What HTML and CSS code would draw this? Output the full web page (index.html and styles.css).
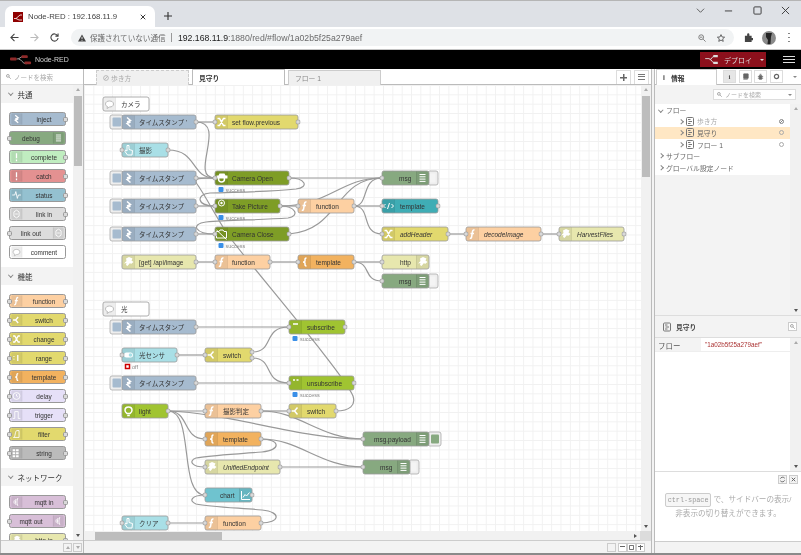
FILE: index.html
```html
<!DOCTYPE html>
<html lang="ja">
<head>
    <meta charset="UTF-8">
    <meta name="viewport" content="width=device-width, initial-scale=1.0">
    <title>Node-RED : 192.168.11.9</title>
    <link rel="stylesheet" href="styles.css">
</head>
<body>
    <!-- shared icons, each drawn in a 13x14 node band -->
    <svg class="defs" aria-hidden="true">
        <symbol id="band" viewBox="0 0 13 14"><path class="band" d="M2 .5H13V13.5H2A1.5 1.5 0 0 1 .5 12V2A1.5 1.5 0 0 1 2 .5Z"/><path class="band-line" d="M13 .5V13.5"/></symbol>
        <symbol id="band-r" viewBox="0 0 13 14"><path class="band" d="M0 .5H11A1.5 1.5 0 0 1 12.5 2V12A1.5 1.5 0 0 1 11 13.5H0Z"/><path class="band-line" d="M.5 .5V13.5"/></symbol>
        <symbol id="i-inject" viewBox="0 0 13 14"><path class="ic thick" d="M5 2.5l3.5 3-3.5 1.5M8.500 7l-3.500 1.500 3.500 3"/></symbol>
        <symbol id="i-debug" viewBox="0 0 13 14"><path class="ic" d="M3.5 3.5h6M3.5 5.8h6M3.5 8.1h6M3.5 10.400h6"/></symbol>
        <symbol id="i-alert" viewBox="0 0 13 14"><path class="ic thick" d="M6.5 2.5v6M6.5 10v2"/></symbol>
        <symbol id="i-status" viewBox="0 0 13 14"><path class="ic" d="M1.5 7h3l1.200-4 1.800 8 1.200-4h3"/></symbol>
        <symbol id="i-link" viewBox="0 0 13 14"><path class="ic" d="M6.5 2.5l3 2v5l-3 2-3-2v-5zM5 7h3"/></symbol>
        <symbol id="i-comment" viewBox="0 0 13 14"><path class="ic grey" d="M2.5 7c0-2 1.800-3 4-3s4 1 4 3-1.800 3-4 3l-2.500 1.500.5-2c-1.200-.3-2-1.200-2-2.500z"/></symbol>
        <symbol id="i-function" viewBox="0 0 13 14"><path class="ic thick" d="M8.5 3C6.800 2.600 6.500 4 6.300 6L5.600 10C5.400 11.200 4.800 11.500 3.800 11.300M4.500 6.600h3.500"/></symbol>
        <symbol id="i-switch" viewBox="0 0 13 14"><path class="ic thick" d="M2.5 7h3l3-3.500M5.500 7l3 3.500"/></symbol>
        <symbol id="i-change" viewBox="0 0 13 14"><path class="ic thick" d="M2.5 3.500h2l4 7h2M2.5 10.500h2l4-7h2"/></symbol>
        <symbol id="i-range" viewBox="0 0 13 14"><path class="ic thick" d="M3.5 5v.8M3.5 8v.8M8 3.500v7"/></symbol>
        <symbol id="i-template" viewBox="0 0 13 14"><path class="ic thick" d="M8.5 3C6.800 3 7 4 7 5.500S6.500 7 5 7c1.500 0 2 .2 2 1.500s-.2 2.500 1.500 2.500"/></symbol>
        <symbol id="i-delay" viewBox="0 0 13 14"><circle class="ic" cx="6.5" cy="7" r="4"/><path class="ic" d="M6.5 4.800V7l1.500 1"/></symbol>
        <symbol id="i-trigger" viewBox="0 0 13 14"><path class="ic" d="M2 11h2.500V3h4v8h2.500"/></symbol>
        <symbol id="i-filter" viewBox="0 0 13 14"><path class="ic" d="M3 11c2.500 0 1.500-8 4-8h2.500v8z"/></symbol>
        <symbol id="i-string" viewBox="0 0 13 14"><path class="fl" d="M2 2.500h3v2.500H2zM6 2.500h3v2.500H6zM2 6h3v2.500H2zM6 6h3v2.500H6zM6 9.500h3v2.500H6zM2 9.500h3v2.500H2z"/></symbol>
        <symbol id="i-mqtt" viewBox="0 0 13 14"><path class="ic" d="M6 3.500c-1 2-1 5 0 7M8 2.500c-1.300 3-1.300 6 0 9M4 5c-.6 1.400-.6 2.600 0 4"/></symbol>
        <symbol id="i-http" viewBox="0 0 13 14"><path class="fl" d="M2 8.500l2.500-2.500-.5-2.500 3-1.500 3.500 1.500-1 2 2 1.500-2.500 2-1-1-2.500 3-1.500-1 .5-2z"/></symbol>
        <symbol id="i-button" viewBox="0 0 13 14"><path class="ic" d="M5 2.500v5.500L3.500 7 3 8.500 5.500 12H10l.5-4.500-3.500-1V2.500z"/></symbol>
        <symbol id="i-toggle" viewBox="0 0 13 14"><rect class="fl" x="2" y="4.500" width="9" height="5" rx="2.500"/><circle class="toggle-dot" cx="8.500" cy="7" r="1.800"/></symbol>
        <symbol id="i-bulb" viewBox="0 0 13 14"><path class="ic thick" d="M5 9.500C3.800 8.800 3 7.700 3 6.300 3 4.300 4.600 3 6.500 3S10 4.300 10 6.300c0 1.400-.8 2.500-2 3.200zM5.200 11.500h2.600"/></symbol>
        <symbol id="i-html" viewBox="0 0 13 14"><path class="ic" d="M3.500 5L1.500 7l2 2M9.500 5l2 2-2 2M7.500 4L5.500 10"/></symbol>
        <symbol id="i-chart" viewBox="0 0 13 14"><path class="ic" d="M2.500 3v8.500h8.500M4 9.500l2-3 1.500 1.500 3-3.500"/></symbol>
        <symbol id="i-cam-open" viewBox="0 0 13 14"><path class="fl" d="M1.500 4.500h2l1-2h5l1 2h2v3h-11z"/><circle class="ic thick" cx="6.500" cy="8" r="3"/></symbol>
        <symbol id="i-cam-take" viewBox="0 0 13 14"><circle class="ic" cx="6.500" cy="4" r="3"/><circle class="fl" cx="6.500" cy="4" r="1.200"/></symbol>
        <symbol id="i-cam-close" viewBox="0 0 13 14"><path class="ic" d="M1.500 4.500h2.500l1-1.500h3l1 1.500h2.500v6.500h-10zM1.500 3l10 9.500"/></symbol>
        <symbol id="i-sub" viewBox="0 0 13 14"><path class="ic thick" d="M4 4h5"/></symbol>
        <symbol id="i-unsub" viewBox="0 0 13 14"><path class="ic thick" d="M4 4h2M7.500 4h2"/></symbol>
        <symbol id="port" viewBox="0 0 5 5"><rect class="port" x=".5" y=".5" width="4" height="4" rx="1.200"/></symbol>
        <symbol id="flow-ic" viewBox="0 0 8 9"><rect x=".5" y=".5" width="7" height="8" rx="1" fill="none" stroke="currentColor"/><path d="M2 2.500h2.500M6 4.500H2.500M2 6.500h2.500" fill="none" stroke="currentColor"/></symbol>
    </svg>

    <div class="tabstrip">
        <div class="tab">
            <svg class="favicon" viewBox="0 0 10 10"><rect width="10" height="10" fill="#8f0000"/><path d="M1 6.500h2L7 3h2M3 6.500l3 1.500h3" fill="none" stroke="#fff" stroke-width=".8"/></svg>
            <span class="tab-title">Node-RED : 192.168.11.9</span>
            <svg class="tab-close" viewBox="0 0 8 8"><path d="M1 1l6 6M7 1l-6 6" stroke="#333" stroke-width="1.300"/></svg>
        </div>
        <svg class="new-tab" viewBox="0 0 10 10"><path d="M5 0v10M0 5h10" stroke="#333" stroke-width="1.400"/></svg>
        <div class="winctrls">
            <svg viewBox="0 0 10 10"><path d="M1 3l4 4 4-4" fill="none" stroke="#555"/></svg>
            <svg viewBox="0 0 10 10"><path d="M1 5.500h8" stroke="#333"/></svg>
            <svg viewBox="0 0 10 10"><rect x="1" y="1" width="8" height="8" rx="1" fill="none" stroke="#333"/></svg>
            <svg viewBox="0 0 10 10"><path d="M1 1l8 8M9 1l-8 8" stroke="#333"/></svg>
        </div>
    </div>

    <div class="toolbar">
        <svg class="nav" viewBox="0 0 10 10"><path d="M9.500 5H1M5 1L1 5l4 4" fill="none" stroke="#444" stroke-width="1.200"/></svg>
        <svg class="nav" viewBox="0 0 10 10"><path d="M.5 5H9M5 1l4 4-4 4" fill="none" stroke="#bbb" stroke-width="1.200"/></svg>
        <svg class="nav" viewBox="0 0 10 10"><path d="M8.500 3A4 4 0 1 0 9 5.500M9 .5V3.500H6" fill="none" stroke="#444" stroke-width="1.200"/></svg>
        <div class="omnibox">
            <svg class="warn" viewBox="0 0 10 10"><path d="M5 .5L10 9.500H0z" fill="#444"/><path d="M5 3.500v3M5 7.500v1" stroke="#fff"/></svg>
            <span class="insecure">保護されていない通信</span>
            <span class="omni-sep"></span>
            <span class="url"><b>192.168.11.9</b>:1880/red/#flow/1a02b5f25a279aef</span>
            <svg class="omni-ic" viewBox="0 0 10 10"><circle cx="4" cy="4" r="3" fill="none" stroke="#666"/><path d="M6.500 6.500L9.500 9.500M2.500 4h3" stroke="#666"/></svg>
            <svg class="omni-ic" viewBox="0 0 10 10"><path d="M5 .8l1.300 2.900 3.200.3-2.400 2.100.7 3.100L5 7.600 2.200 9.200l.7-3.100L.5 4l3.200-.3z" fill="none" stroke="#444"/></svg>
        </div>
        <svg class="ext" viewBox="0 0 10 10"><path d="M1 3h2.500V1.500a1 1 0 0 1 2.500 0V3H8.500v2.500H10a1 1 0 0 1 0 2.500H8.500V10H1z" fill="#444"/></svg>
        <svg class="avatar" viewBox="0 0 14 14"><circle cx="7" cy="7" r="7" fill="#8a8a8a"/><path d="M4 2h6l-1 4-.5 7h-3l.5-4L4 6z" fill="#222"/></svg>
        <svg class="dots" viewBox="0 0 4 12"><path d="M2 1v1.200M2 5.400v1.200M2 9.800v1.200" stroke="#444" stroke-width="1.400"/></svg>
    </div>

    <header class="nr-header">
        <svg class="nr-logo" viewBox="0 0 24 12"><path d="M7 5C11 5 10 2.500 14 2.500M9 5c3 0 4 5 8 5" fill="none" stroke="#ccc" stroke-width=".8"/><rect x="0" y="3.500" width="7" height="3" rx="1" fill="#8f2a2a"/><rect x="12" y="1" width="6.500" height="3" rx="1" fill="#8f2a2a"/><rect x="15" y="7.500" width="7" height="3" rx="1" fill="#8f2a2a"/></svg>
        <span class="nr-title">Node-RED</span>
        <div class="deploy">
            <svg class="deploy-ic" viewBox="0 0 14 10"><path d="M0 4h5M5 5C8 5 7 1.500 10 1.500M5 5c3 0 2 3.500 5 3.500" fill="none" stroke="#ddd"/><rect x="9" y="0" width="5" height="2.500" fill="#ddd"/><rect x="9" y="7.500" width="5" height="2.500" fill="#ddd"/></svg>
            <span class="deploy-label">デプロイ</span>
            <span class="deploy-caret"></span>
        </div>
        <div class="burger"><i></i><i></i><i></i></div>
    </header>

    <div class="main">
        <aside class="palette">
            <div class="search"><svg class="search-ic" viewBox="0 0 8 8"><circle cx="3" cy="3" r="2.200" fill="none" stroke="#777"/><path d="M5 5l2.500 2.500" stroke="#777"/></svg><span>ノードを検索</span></div>
            <div class="palette-body">
                <div class="palette-list">
                    <div class="cat-head"><span class="chev"></span>共通</div>
                    <div class="cat">
                        <div class="pnode inject"><svg><use href="#band"/><use href="#i-inject"/></svg><span>inject</span><i class="pport out"></i></div>
                        <div class="pnode debug"><i class="pport in"></i><span>debug</span><svg><use href="#band-r"/><use href="#i-debug"/></svg></div>
                        <div class="pnode complete"><svg><use href="#band"/><use href="#i-alert"/></svg><span>complete</span><i class="pport out"></i></div>
                        <div class="pnode catch"><svg><use href="#band"/><use href="#i-alert"/></svg><span>catch</span><i class="pport out"></i></div>
                        <div class="pnode status"><svg><use href="#band"/><use href="#i-status"/></svg><span>status</span><i class="pport out"></i></div>
                        <div class="pnode link"><svg><use href="#band"/><use href="#i-link"/></svg><span>link in</span><i class="pport out"></i></div>
                        <div class="pnode link"><i class="pport in"></i><span>link out</span><svg><use href="#band-r"/><use href="#i-link"/></svg></div>
                        <div class="pnode comment"><svg><use href="#band"/><use href="#i-comment"/></svg><span>comment</span></div>
                    </div>
                    <div class="cat-head"><span class="chev"></span>機能</div>
                    <div class="cat">
                        <div class="pnode function"><i class="pport in"></i><svg><use href="#band"/><use href="#i-function"/></svg><span>function</span><i class="pport out"></i></div>
                        <div class="pnode switch"><i class="pport in"></i><svg><use href="#band"/><use href="#i-switch"/></svg><span>switch</span><i class="pport out"></i></div>
                        <div class="pnode switch"><i class="pport in"></i><svg><use href="#band"/><use href="#i-change"/></svg><span>change</span><i class="pport out"></i></div>
                        <div class="pnode switch"><i class="pport in"></i><svg><use href="#band"/><use href="#i-range"/></svg><span>range</span><i class="pport out"></i></div>
                        <div class="pnode template"><i class="pport in"></i><svg><use href="#band"/><use href="#i-template"/></svg><span>template</span><i class="pport out"></i></div>
                        <div class="pnode delay"><i class="pport in"></i><svg><use href="#band"/><use href="#i-delay"/></svg><span>delay</span><i class="pport out"></i></div>
                        <div class="pnode delay"><i class="pport in"></i><svg><use href="#band"/><use href="#i-trigger"/></svg><span>trigger</span><i class="pport out"></i></div>
                        <div class="pnode switch"><i class="pport in"></i><svg><use href="#band"/><use href="#i-filter"/></svg><span>filter</span><i class="pport out"></i></div>
                        <div class="pnode string"><i class="pport in"></i><svg><use href="#band"/><use href="#i-string"/></svg><span>string</span><i class="pport out"></i></div>
                    </div>
                    <div class="cat-head"><span class="chev"></span>ネットワーク</div>
                    <div class="cat">
                        <div class="pnode mqtt"><svg><use href="#band"/><use href="#i-mqtt"/></svg><span>mqtt in</span><i class="pport out"></i></div>
                        <div class="pnode mqtt"><i class="pport in"></i><span>mqtt out</span><svg><use href="#band-r"/><use href="#i-mqtt"/></svg></div>
                        <div class="pnode http"><svg><use href="#band"/><use href="#i-http"/></svg><span>http in</span><i class="pport out"></i></div>
                    </div>
                </div>
                <div class="vbar palette-bar"><span class="up"></span><span class="thumb"></span><span class="down"></span></div>
            </div>
            <div class="palette-foot"><span class="foot-btn"><i class="up-mini"></i></span><span class="foot-btn"><i class="down-mini"></i></span></div>
        </aside>

        <section class="workspace">
            <div class="ws-tabs">
                <div class="ws-tab off"><svg class="no-ic" viewBox="0 0 8 8"><circle cx="4" cy="4" r="3.200" fill="none" stroke="#aaa"/><path d="M2 6.200L6 1.800" stroke="#aaa"/></svg>歩き方</div>
                <div class="ws-tab active">見守り</div>
                <div class="ws-tab">フロー 1</div>
                <div class="ws-tools">
                    <span class="tool-btn plus"></span>
                    <span class="tool-btn list"></span>
                </div>
            </div>
            <div class="ws-canvas">
                <svg class="flow" viewBox="84 85 557 446" width="557" height="446">
                    <g class="wires">
                        <path d="M196,122H215"/>
                        <path d="M196,122C228,122 188,178 215,178"/>
                        <path d="M168,150C198,150 190,178 215,178"/>
                        <path d="M196,178H215"/>
                        <path d="M196,206H215"/>
                        <path d="M196,234H215"/>
                        <path d="M336,411C350,411 356,405 353,396C345,375 250,265 228,235C215,215 205,195 197,184C193,178 200,178 215,178"/>
                        <path d="M289,178C305,178 310,187 296,189C270,192 235,192 210,193C196,194 196,206 215,206"/>
                        <path d="M280,206C296,206 300,216 288,218C260,220 230,220 206,222C190,224 195,234 215,234"/>
                        <path d="M289,178H382"/>
                        <path d="M289,234C340,230 335,178 382,178"/>
                        <path d="M280,206C330,206 340,178 382,178"/>
                        <path d="M280,206H298"/>
                        <path d="M354,206C370,206 360,178 382,178"/>
                        <path d="M354,206H382"/>
                        <path d="M354,206C372,206 360,234 382,234"/>
                        <path d="M448,234H466"/>
                        <path d="M541,234H559"/>
                        <path d="M196,262H215"/>
                        <path d="M270,262H298"/>
                        <path d="M354,262H382"/>
                        <path d="M354,262C372,262 362,281 382,281"/>
                        <path d="M196,327H289"/>
                        <path d="M177,355H205"/>
                        <path d="M252,352C275,352 262,327 289,327"/>
                        <path d="M252,358C275,358 262,383 289,383"/>
                        <path d="M196,383H289"/>
                        <path d="M168,411H205"/>
                        <path d="M168,411C230,413 300,439 363,439"/>
                        <path d="M168,411C190,411 182,439 205,439"/>
                        <path d="M168,411C195,411 178,495 205,495"/>
                        <path d="M261,411H289"/>
                        <path d="M261,411C300,411 320,439 363,439"/>
                        <path d="M261,439C300,439 320,467 363,467"/>
                        <path d="M261,439C280,439 282,450 262,452C240,454 210,455 196,458C188,461 192,467 205,467"/>
                        <path d="M280,467H363"/>
                        <path d="M168,523H205"/>
                        <path d="M261,523C280,523 282,512 262,510C240,508 210,507 196,504C188,501 192,495 205,495"/>
                    </g>

                    <g class="node" transform="translate(103,97)"><rect class="body comment" width="46" height="14" rx="2"/><use href="#band" width="13" height="14"/><use href="#i-comment" width="13" height="14"/><text x="18" y="9.500">カメラ</text></g>
                    <g class="node" transform="translate(103,302)"><rect class="body comment" width="46" height="14" rx="2"/><use href="#band" width="13" height="14"/><use href="#i-comment" width="13" height="14"/><text x="18" y="9.500">光</text></g>

                    <g class="node" transform="translate(122,115)"><rect class="btn" x="-12" width="13" height="14" rx="2"/><rect class="btn-fill inject" x="-9.500" y="2.500" width="8.500" height="9" rx="1"/><rect class="body inject" width="74" height="14" rx="2"/><use href="#band" width="13" height="14"/><use href="#i-inject" width="13" height="14"/><text x="17" y="9.500">タイムスタンプ '</text><use href="#port" x="71.500" y="4.500" width="5" height="5"/></g>
                    <g class="node" transform="translate(122,171)"><rect class="btn" x="-12" width="13" height="14" rx="2"/><rect class="btn-fill inject" x="-9.500" y="2.500" width="8.500" height="9" rx="1"/><rect class="body inject" width="74" height="14" rx="2"/><use href="#band" width="13" height="14"/><use href="#i-inject" width="13" height="14"/><text x="17" y="9.500">タイムスタンプ</text><use href="#port" x="71.500" y="4.500" width="5" height="5"/></g>
                    <g class="node" transform="translate(122,199)"><rect class="btn" x="-12" width="13" height="14" rx="2"/><rect class="btn-fill inject" x="-9.500" y="2.500" width="8.500" height="9" rx="1"/><rect class="body inject" width="74" height="14" rx="2"/><use href="#band" width="13" height="14"/><use href="#i-inject" width="13" height="14"/><text x="17" y="9.500">タイムスタンプ</text><use href="#port" x="71.500" y="4.500" width="5" height="5"/></g>
                    <g class="node" transform="translate(122,227)"><rect class="btn" x="-12" width="13" height="14" rx="2"/><rect class="btn-fill inject" x="-9.500" y="2.500" width="8.500" height="9" rx="1"/><rect class="body inject" width="74" height="14" rx="2"/><use href="#band" width="13" height="14"/><use href="#i-inject" width="13" height="14"/><text x="17" y="9.500">タイムスタンプ</text><use href="#port" x="71.500" y="4.500" width="5" height="5"/></g>
                    <g class="node" transform="translate(122,320)"><rect class="btn" x="-12" width="13" height="14" rx="2"/><rect class="btn-fill inject" x="-9.500" y="2.500" width="8.500" height="9" rx="1"/><rect class="body inject" width="74" height="14" rx="2"/><use href="#band" width="13" height="14"/><use href="#i-inject" width="13" height="14"/><text x="17" y="9.500">タイムスタンプ</text><use href="#port" x="71.500" y="4.500" width="5" height="5"/></g>
                    <g class="node" transform="translate(122,376)"><rect class="btn" x="-12" width="13" height="14" rx="2"/><rect class="btn-fill inject" x="-9.500" y="2.500" width="8.500" height="9" rx="1"/><rect class="body inject" width="74" height="14" rx="2"/><use href="#band" width="13" height="14"/><use href="#i-inject" width="13" height="14"/><text x="17" y="9.500">タイムスタンプ</text><use href="#port" x="71.500" y="4.500" width="5" height="5"/></g>

                    <g class="node" transform="translate(215,115)"><rect class="body switch" width="83" height="14" rx="2"/><use href="#band" width="13" height="14"/><use href="#i-change" width="13" height="14"/><text x="17" y="9.500">set flow.previous</text><use href="#port" x="-2.500" y="4.500" width="5" height="5"/><use href="#port" x="80.500" y="4.500" width="5" height="5"/></g>

                    <g class="node" transform="translate(122,143)"><rect class="body uibtn" width="46" height="14" rx="2"/><use href="#band" width="13" height="14"/><use href="#i-button" width="13" height="14"/><text x="17" y="9.500">撮影</text><use href="#port" x="-2.500" y="4.500" width="5" height="5"/><use href="#port" x="43.500" y="4.500" width="5" height="5"/></g>

                    <g class="node" transform="translate(215,171)"><rect class="body camera" width="74" height="14" rx="2"/><use href="#band" width="13" height="14"/><use href="#i-cam-open" width="13" height="14"/><text x="17" y="9.500">Camera Open</text><use href="#port" x="-2.500" y="4.500" width="5" height="5"/><use href="#port" x="71.500" y="4.500" width="5" height="5"/><rect class="dot ok" x="3.500" y="16" width="5" height="5" rx="1"/><text class="stat" x="10.500" y="20.500">success</text></g>
                    <g class="node" transform="translate(215,199)"><rect class="body camera" width="65" height="14" rx="2"/><use href="#band" width="13" height="14"/><use href="#i-cam-take" width="13" height="14"/><text x="17" y="9.500">Take Picture</text><use href="#port" x="-2.500" y="4.500" width="5" height="5"/><use href="#port" x="62.500" y="4.500" width="5" height="5"/><rect class="dot ok" x="3.500" y="16" width="5" height="5" rx="1"/><text class="stat" x="10.500" y="20.500">success</text></g>
                    <g class="node" transform="translate(215,227)"><rect class="body camera" width="74" height="14" rx="2"/><use href="#band" width="13" height="14"/><use href="#i-cam-close" width="13" height="14"/><text x="17" y="9.500">Camera Close</text><use href="#port" x="-2.500" y="4.500" width="5" height="5"/><use href="#port" x="71.500" y="4.500" width="5" height="5"/><rect class="dot ok" x="3.500" y="16" width="5" height="5" rx="1"/><text class="stat" x="10.500" y="20.500">success</text></g>

                    <g class="node" transform="translate(298,199)"><rect class="body function" width="56" height="14" rx="2"/><use href="#band" width="13" height="14"/><use href="#i-function" width="13" height="14"/><text x="18" y="9.500">function</text><use href="#port" x="-2.500" y="4.500" width="5" height="5"/><use href="#port" x="53.500" y="4.500" width="5" height="5"/></g>

                    <g class="node" transform="translate(382,171)"><rect class="btn" x="46" width="10" height="14" rx="2"/><rect class="btn-fill blank" x="47" y="2.500" width="6.500" height="9"/><rect class="body debug" width="47" height="14" rx="2"/><use href="#band-r" x="34" width="13" height="14"/><use href="#i-debug" x="34" width="13" height="14"/><text x="17" y="9.500">msg</text><use href="#port" x="-2.500" y="4.500" width="5" height="5"/></g>
                    <g class="node" transform="translate(382,199)"><rect class="body html" width="56" height="14" rx="2"/><use href="#band" width="13" height="14"/><use href="#i-html" width="13" height="14"/><text x="18" y="9.500">template</text><use href="#port" x="-2.500" y="4.500" width="5" height="5"/><use href="#port" x="53.500" y="4.500" width="5" height="5"/></g>
                    <g class="node" transform="translate(382,227)"><rect class="body switch" width="66" height="14" rx="2"/><use href="#band" width="13" height="14"/><use href="#i-change" width="13" height="14"/><text class="em" x="18" y="9.500">addHeader</text><use href="#port" x="-2.500" y="4.500" width="5" height="5"/><use href="#port" x="63.500" y="4.500" width="5" height="5"/></g>
                    <g class="node" transform="translate(466,227)"><rect class="body function" width="75" height="14" rx="2"/><use href="#band" width="13" height="14"/><use href="#i-function" width="13" height="14"/><text class="em" x="18" y="9.500">decodeImage</text><use href="#port" x="-2.500" y="4.500" width="5" height="5"/><use href="#port" x="72.500" y="4.500" width="5" height="5"/></g>
                    <g class="node" transform="translate(559,227)"><rect class="body http" width="65" height="14" rx="2"/><use href="#band" width="13" height="14"/><use href="#i-http" width="13" height="14"/><text class="em" x="18" y="9.500">HarvestFiles</text><use href="#port" x="-2.500" y="4.500" width="5" height="5"/><use href="#port" x="62.500" y="4.500" width="5" height="5"/></g>

                    <g class="node" transform="translate(122,255)"><rect class="body http" width="74" height="14" rx="2"/><use href="#band" width="13" height="14"/><use href="#i-http" width="13" height="14"/><text x="17" y="9.500">[get] /api/image</text><use href="#port" x="71.500" y="4.500" width="5" height="5"/></g>
                    <g class="node" transform="translate(215,255)"><rect class="body function" width="55" height="14" rx="2"/><use href="#band" width="13" height="14"/><use href="#i-function" width="13" height="14"/><text x="17" y="9.500">function</text><use href="#port" x="-2.500" y="4.500" width="5" height="5"/><use href="#port" x="52.500" y="4.500" width="5" height="5"/></g>
                    <g class="node" transform="translate(298,255)"><rect class="body template" width="56" height="14" rx="2"/><use href="#band" width="13" height="14"/><use href="#i-template" width="13" height="14"/><text x="18" y="9.500">template</text><use href="#port" x="-2.500" y="4.500" width="5" height="5"/><use href="#port" x="53.500" y="4.500" width="5" height="5"/></g>
                    <g class="node" transform="translate(382,255)"><rect class="body http" width="47" height="14" rx="2"/><use href="#band-r" x="34" width="13" height="14"/><use href="#i-http" x="34" width="13" height="14"/><text x="18" y="9.500">http</text><use href="#port" x="-2.500" y="4.500" width="5" height="5"/></g>
                    <g class="node" transform="translate(382,274)"><rect class="btn" x="46" width="10" height="14" rx="2"/><rect class="btn-fill blank" x="47" y="2.500" width="6.500" height="9"/><rect class="body debug" width="47" height="14" rx="2"/><use href="#band-r" x="34" width="13" height="14"/><use href="#i-debug" x="34" width="13" height="14"/><text x="17" y="9.500">msg</text><use href="#port" x="-2.500" y="4.500" width="5" height="5"/></g>

                    <g class="node" transform="translate(289,320)"><rect class="body lime" width="56" height="14" rx="2"/><use href="#band" width="13" height="14"/><use href="#i-sub" width="13" height="14"/><text x="18" y="9.500">subscribe</text><use href="#port" x="-2.500" y="4.500" width="5" height="5"/><use href="#port" x="53.500" y="4.500" width="5" height="5"/><rect class="dot ok" x="3.500" y="16" width="5" height="5" rx="1"/><text class="stat" x="11" y="20.500">success</text></g>
                    <g class="node" transform="translate(122,348)"><rect class="body uibtn" width="55" height="14" rx="2"/><use href="#band" width="13" height="14"/><use href="#i-toggle" width="13" height="14"/><text x="17" y="9.500">光センサ</text><use href="#port" x="-2.500" y="4.500" width="5" height="5"/><use href="#port" x="52.500" y="4.500" width="5" height="5"/><rect class="dot off" x="3.500" y="16.500" width="4" height="4"/><text class="stat" x="10" y="20.500">off</text></g>
                    <g class="node" transform="translate(205,348)"><rect class="body switch" width="47" height="14" rx="2"/><use href="#band" width="13" height="14"/><use href="#i-switch" width="13" height="14"/><text x="18" y="9.500">switch</text><use href="#port" x="-2.500" y="4.500" width="5" height="5"/><use href="#port" x="44.500" y="1.500" width="5" height="5"/><use href="#port" x="44.500" y="7.500" width="5" height="5"/></g>
                    <g class="node" transform="translate(289,376)"><rect class="body lime" width="65" height="14" rx="2"/><use href="#band" width="13" height="14"/><use href="#i-unsub" width="13" height="14"/><text x="18" y="9.500">unsubscribe</text><use href="#port" x="-2.500" y="4.500" width="5" height="5"/><use href="#port" x="62.500" y="4.500" width="5" height="5"/><rect class="dot ok" x="3.500" y="16" width="5" height="5" rx="1"/><text class="stat" x="11" y="20.500">success</text></g>

                    <g class="node" transform="translate(122,404)"><rect class="body lime" width="46" height="14" rx="2"/><use href="#band" width="13" height="14"/><use href="#i-bulb" width="13" height="14"/><text x="17" y="9.500">light</text><use href="#port" x="43.500" y="4.500" width="5" height="5"/></g>
                    <g class="node" transform="translate(205,404)"><rect class="body function" width="56" height="14" rx="2"/><use href="#band" width="13" height="14"/><use href="#i-function" width="13" height="14"/><text x="18" y="9.500">撮影判定</text><use href="#port" x="-2.500" y="4.500" width="5" height="5"/><use href="#port" x="53.500" y="4.500" width="5" height="5"/></g>
                    <g class="node" transform="translate(289,404)"><rect class="body switch" width="47" height="14" rx="2"/><use href="#band" width="13" height="14"/><use href="#i-switch" width="13" height="14"/><text x="18" y="9.500">switch</text><use href="#port" x="-2.500" y="4.500" width="5" height="5"/><use href="#port" x="44.500" y="4.500" width="5" height="5"/></g>
                    <g class="node" transform="translate(205,432)"><rect class="body template" width="56" height="14" rx="2"/><use href="#band" width="13" height="14"/><use href="#i-template" width="13" height="14"/><text x="18" y="9.500">template</text><use href="#port" x="-2.500" y="4.500" width="5" height="5"/><use href="#port" x="53.500" y="4.500" width="5" height="5"/></g>
                    <g class="node" transform="translate(363,432)"><rect class="btn" x="65" width="13" height="14" rx="2"/><rect class="btn-fill debug" x="68" y="2.500" width="8" height="9" rx="1"/><rect class="body debug" width="66" height="14" rx="2"/><use href="#band-r" x="53" width="13" height="14"/><use href="#i-debug" x="53" width="13" height="14"/><text x="11" y="9.500">msg.payload</text><use href="#port" x="-2.500" y="4.500" width="5" height="5"/></g>
                    <g class="node" transform="translate(205,460)"><rect class="body http" width="75" height="14" rx="2"/><use href="#band" width="13" height="14"/><use href="#i-http" width="13" height="14"/><text class="em" x="18" y="9.500">UnifiedEndpoint</text><use href="#port" x="-2.500" y="4.500" width="5" height="5"/><use href="#port" x="72.500" y="4.500" width="5" height="5"/></g>
                    <g class="node" transform="translate(363,460)"><rect class="btn" x="46" width="10" height="14" rx="2"/><rect class="btn-fill blank" x="47" y="2.500" width="6.500" height="9"/><rect class="body debug" width="47" height="14" rx="2"/><use href="#band-r" x="34" width="13" height="14"/><use href="#i-debug" x="34" width="13" height="14"/><text x="17" y="9.500">msg</text><use href="#port" x="-2.500" y="4.500" width="5" height="5"/></g>
                    <g class="node" transform="translate(205,488)"><rect class="body chart" width="47" height="14" rx="2"/><use href="#band-r" x="34" width="13" height="14"/><use href="#i-chart" x="34" width="13" height="14"/><text x="15" y="9.500">chart</text><use href="#port" x="-2.500" y="4.500" width="5" height="5"/><use href="#port" x="44.500" y="4.500" width="5" height="5"/></g>
                    <g class="node" transform="translate(122,516)"><rect class="body uibtn" width="46" height="14" rx="2"/><use href="#band" width="13" height="14"/><use href="#i-button" width="13" height="14"/><text x="17" y="9.500">クリア</text><use href="#port" x="-2.500" y="4.500" width="5" height="5"/><use href="#port" x="43.500" y="4.500" width="5" height="5"/></g>
                    <g class="node" transform="translate(205,516)"><rect class="body function" width="56" height="14" rx="2"/><use href="#band" width="13" height="14"/><use href="#i-function" width="13" height="14"/><text x="18" y="9.500">function</text><use href="#port" x="-2.500" y="4.500" width="5" height="5"/><use href="#port" x="53.500" y="4.500" width="5" height="5"/></g>
                </svg>
                <div class="vbar canvas-bar"><span class="up"></span><span class="thumb"></span><span class="down"></span></div>
            </div>
            <div class="hbar">
                <span class="hthumb"></span>
                <span class="right"></span>
                <span class="corner"></span>
            </div>
            <div class="ws-foot">
                <span class="foot-btn wide"></span>
                <span class="zoom-group">
                    <span class="foot-btn minus"></span><span class="foot-btn ring"></span><span class="foot-btn add"></span>
                </span>
            </div>
        </section>

        <div class="separator"></div>

        <aside class="sidebar">
            <div class="side-tabs">
                <div class="side-tab"><b>i</b>情報</div>
                <span class="side-btn on"><b>i</b></span>
                <span class="side-btn"><svg viewBox="0 0 8 8"><path d="M2 1h5v5H2zM1.500 7h5" fill="#666" stroke="#666"/></svg></span>
                <span class="side-btn"><svg viewBox="0 0 8 8"><path d="M2.500 3h3v4h-3zM3 1.500h2M1 4h1M6 4h1M1 6h1M6 6h1" fill="#666" stroke="#666"/></svg></span>
                <span class="side-btn"><svg viewBox="0 0 8 8"><circle cx="4" cy="4" r="2.400" fill="none" stroke="#666" stroke-width="1.400"/></svg></span>
                <span class="caret"></span>
            </div>
            <div class="side-top">
                <div class="side-search-row">
                    <div class="side-search"><svg class="search-ic" viewBox="0 0 8 8"><circle cx="3" cy="3" r="2.200" fill="none" stroke="#777"/><path d="M5 5l2.500 2.500" stroke="#777"/></svg><span>ノードを検索</span><i class="caret"></i></div>
                </div>
                <div class="side-tree-wrap">
                    <div class="tree">
                        <div class="row"><i class="open"></i>フロー</div>
                        <div class="row child off"><i class="shut"></i><svg class="flow-ic"><use href="#flow-ic"/></svg>歩き方<span class="state no"></span></div>
                        <div class="row child sel"><i class="shut"></i><svg class="flow-ic"><use href="#flow-ic"/></svg>見守り<span class="state"></span></div>
                        <div class="row child"><i class="shut"></i><svg class="flow-ic"><use href="#flow-ic"/></svg>フロー 1<span class="state"></span></div>
                        <div class="row"><i class="shut"></i>サブフロー</div>
                        <div class="row"><i class="shut"></i>グローバル設定ノード</div>
                    </div>
                    <div class="vbar side-bar"><span class="up"></span><span class="down"></span></div>
                </div>
            </div>
            <div class="info-head">
                <svg class="flow-ic big"><use href="#flow-ic"/></svg><b>見守り</b>
                <span class="foot-btn find"><svg class="search-ic" viewBox="0 0 8 8"><circle cx="3" cy="3" r="2.200" fill="none" stroke="#777"/><path d="M5 5l2.500 2.500" stroke="#777"/></svg></span>
            </div>
            <div class="info-body">
                <div class="info-table">
                    <div class="info-row"><span class="key">フロー</span><span class="val">"1a02b5f25a279aef"</span></div>
                </div>
                <div class="vbar side-bar"><span class="up"></span><span class="down"></span></div>
            </div>
            <div class="tips">
                <div class="tips-btns">
                    <span class="foot-btn"><svg viewBox="0 0 8 8"><path d="M6.500 2.500A3 3 0 0 0 1.500 3M1.500 5.500a3 3 0 0 0 5-.5" fill="none" stroke="#555"/></svg></span>
                    <span class="foot-btn"><svg viewBox="0 0 8 8"><path d="M2 2l4 4M6 2L2 6" stroke="#555"/></svg></span>
                </div>
                <p><code>ctrl-space</code> で、サイドバーの表示/<br>非表示の切り替えができます。</p>
            </div>
            <div class="side-foot"></div>
        </aside>
    </div>
</body>
</html>
```

FILE: styles.css
```css
* {
    margin: 0;
    padding: 0;
    box-sizing: border-box;
}

html, body {
    width: 801px;
    height: 555px;
    overflow: hidden;
}

body {
    display: flex;
    flex-direction: column;
    font-family: "Liberation Sans", "Noto Sans CJK JP", sans-serif;
    background: #b8b8b8;
    border-bottom: 2px solid #8a8a8a;
    color: #555;
    /* the whole capture is a scaled down window, so nothing is pixel sharp */
    filter: blur(.3px);
}

.defs {
    position: absolute;
    width: 0;
    height: 0;
}

/* browser frame */
.tabstrip {
    height: 27px;
    flex: none;
    display: flex;
    align-items: flex-end;
    background: #dee1e6;
    border-top: 1px solid #b5b5b5;
    padding-left: 5px;
}

.tab {
    width: 150px;
    height: 21px;
    background: #fff;
    border-radius: 7px 7px 0 0;
    display: flex;
    align-items: center;
    padding: 0 7px 0 8px;
}

.favicon {
    width: 10px;
    height: 10px;
}

.tab-title {
    font-size: 7.8px;
    color: #444;
    margin-left: 5px;
    flex: 1;
}

.tab-close {
    width: 6px;
    height: 6px;
    margin-right: 2px;
}

.new-tab {
    width: 8px;
    height: 8px;
    margin: 0 0 7px 9px;
}

.winctrls {
    margin-left: auto;
    align-self: flex-start;
    display: flex;
    gap: 19.5px;
    padding: 5px 11px 0 0;
}

.winctrls svg {
    width: 9px;
    height: 9px;
}

.toolbar {
    height: 23px;
    flex: none;
    display: flex;
    align-items: center;
    background: #fff;
    border-bottom: 1px solid #c4c4c4;
    padding: 0 10px 1px 10px;
}

.nav {
    width: 9px;
    height: 9px;
    margin-right: 11px;
}

.omnibox {
    width: 665px;
    height: 17px;
    margin-left: 1px;
    background: #f1f3f4;
    border-radius: 9px;
    display: flex;
    align-items: center;
    padding: 0 9px 0 7px;
}

.warn {
    width: 8px;
    height: 8px;
    flex: none;
}

.insecure {
    font-size: 7.6px;
    color: #6a6a6a;
    margin-left: 4px;
    width: 76px;
    flex: none;
    white-space: nowrap;
}

.omni-sep {
    width: 1px;
    height: 9px;
    background: #999;
    margin: 0 6px 0 5px;
    flex: none;
}

.url {
    font-size: 8.7px;
    color: #6a6a6a;
    flex: 1;
}

.url b {
    font-weight: normal;
    color: #222;
}

.omni-ic {
    width: 8px;
    height: 8px;
    margin-left: 11px;
}

.ext {
    width: 9px;
    height: 9px;
    margin-left: 10px;
}

.avatar {
    width: 14px;
    height: 14px;
    margin-left: 9px;
}

.dots {
    width: 4px;
    height: 11px;
    margin-left: 11px;
}

/* node-red header */
.nr-header {
    height: 19px;
    flex: none;
    display: flex;
    align-items: center;
    background: #000;
    padding-left: 10px;
}

.nr-logo {
    width: 23px;
    height: 12px;
}

.nr-title {
    color: #d4d4d4;
    font-size: 7px;
    margin-left: 2px;
}

.deploy {
    width: 66px;
    height: 15px;
    margin-left: auto;
    background: #8c101c;
    display: flex;
    align-items: center;
    padding-left: 5px;
}

.deploy-ic {
    width: 13px;
    height: 9px;
}

.deploy-label {
    color: #ddd;
    font-size: 7px;
    margin-left: 6px;
}

.deploy-caret {
    border: 2px solid transparent;
    border-top: 2.5px solid #ddd;
    border-bottom: 0;
    margin-left: 8px;
}

.burger {
    width: 12px;
    margin: 0 6px 0 17px;
    display: flex;
    flex-direction: column;
    gap: 1.5px;
}

.burger i {
    height: 1.5px;
    background: #ddd;
}

/* main columns */
.main {
    flex: 1;
    min-height: 0;
    display: flex;
    background: #fff;
    border-left: 1px solid #bbb;
}

.palette {
    width: 83px;
    flex: none;
    display: flex;
    flex-direction: column;
    border-right: 1px solid #bbb;
    background: #f3f3f3;
}

.search {
    height: 16px;
    flex: none;
    background: #fff;
    border-bottom: 1px solid #ddd;
    display: flex;
    align-items: center;
    padding-left: 5px;
    font-size: 6.5px;
    color: #aaa;
}

.search-ic {
    width: 5px;
    height: 5px;
    margin-right: 3px;
}

.palette-body {
    flex: 1;
    min-height: 0;
    display: flex;
}

.palette-list {
    width: 72px;
    overflow: hidden;
}

.cat-head {
    height: 18px;
    background: #f3f3f3;
    display: flex;
    align-items: center;
    padding-left: 7px;
    font-size: 7.5px;
    color: #333;
}

.chev {
    width: 3.5px;
    height: 3.5px;
    border: solid #888;
    border-width: 0 1px 1px 0;
    transform: rotate(45deg);
    margin: -2px 5px 0 1px;
}

.cat {
    background: #fff;
    padding: 9px 0 8px 8px;
    display: flex;
    flex-direction: column;
    gap: 5px;
}

.pnode {
    position: relative;
    width: 57px;
    height: 14px;
    flex: none;
    border: 1px solid #999;
    border-radius: 2.5px;
    display: flex;
    align-items: center;
    font-size: 6.4px;
    color: #333;
}

.pnode svg {
    width: 13px;
    height: 12px;
    flex: none;
}

.pnode span {
    flex: 1;
    text-align: center;
}

.pport {
    position: absolute;
    width: 5px;
    height: 5px;
    top: 3.5px;
    background: #d9d9d9;
    border: 1px solid #999;
    border-radius: 1.5px;
}

.pport.in {
    left: -3px;
}

.pport.out {
    right: -3px;
}

.palette-foot {
    height: 13px;
    flex: none;
    border-top: 1px solid #ccc;
    display: flex;
    justify-content: flex-end;
    align-items: center;
    gap: 1px;
    padding-right: 1px;
}

.foot-btn {
    width: 9px;
    height: 9px;
    background: #f3f3f3;
    border: 1px solid #ccc;
    display: flex;
    align-items: center;
    justify-content: center;
}

.foot-btn svg {
    width: 7px;
    height: 7px;
}

.up-mini {
    border: 2px solid transparent;
    border-bottom: 3px solid #aaa;
    border-top: 0;
}

.down-mini {
    border: 2px solid transparent;
    border-top: 3px solid #aaa;
    border-bottom: 0;
}

/* scrollbars */
.vbar {
    width: 10px;
    flex: none;
    background: #f1f1f1;
    display: flex;
    flex-direction: column;
    align-items: center;
    justify-content: space-between;
    position: relative;
}

.vbar .up {
    margin-top: 3px;
    border: 2.5px solid transparent;
    border-bottom: 3px solid #aaa;
    border-top: 0;
}

.vbar .down {
    margin-bottom: 3px;
    border: 2.5px solid transparent;
    border-top: 3px solid #555;
    border-bottom: 0;
}

.vbar .thumb {
    position: absolute;
    left: 1px;
    right: 1px;
    background: #bdbdbd;
}

.palette-bar .thumb {
    top: 11px;
    height: 70px;
}

.canvas-bar .thumb {
    top: 11px;
    height: 81px;
}

.hbar {
    height: 10px;
    flex: none;
    display: flex;
    align-items: center;
    background: #f1f1f1;
    position: relative;
    border-bottom: 1px solid #ccc;
}

.hthumb {
    width: 127px;
    height: 8px;
    margin-left: 11px;
    background: #bdbdbd;
}

.hbar .right {
    margin-left: auto;
    margin-right: 3px;
    border: 2.5px solid transparent;
    border-left: 3px solid #555;
    border-right: 0;
}

.hbar .corner {
    width: 11px;
    height: 10px;
    background: #dcdcdc;
}

/* workspace */
.workspace {
    width: 567px;
    flex: none;
    display: flex;
    flex-direction: column;
    background: #fff;
}

.ws-tabs {
    height: 16px;
    flex: none;
    display: flex;
    align-items: flex-end;
    gap: 3px;
    padding-left: 12px;
    border-bottom: 1px solid #bbb;
}

.ws-tab {
    width: 93px;
    height: 15px;
    background: #f0f0f0;
    border: 1px solid #ccc;
    border-bottom: 0;
    margin-bottom: -1px;
    display: flex;
    align-items: center;
    padding-left: 6px;
    font-size: 6.8px;
    color: #888;
}

.ws-tab.off {
    border-style: dashed;
    color: #aaa;
}

.ws-tab.active {
    background: #fff;
    border-color: #bbb;
    height: 16px;
    color: #333;
    font-weight: bold;
}

.no-ic {
    width: 6px;
    height: 6px;
    margin-right: 2px;
}

.ws-tools {
    margin-left: auto;
    display: flex;
    gap: 3px;
    padding-right: 2px;
}

.tool-btn {
    width: 15px;
    height: 14px;
    border: 1px solid #ddd;
    border-bottom: 0;
    background: center / 7px 7px no-repeat;
}

.tool-btn.plus {
    background-image: linear-gradient(#666, #666), linear-gradient(#666, #666);
    background-size: 7px 1.5px, 1.5px 7px;
}

.tool-btn.list {
    background-image: repeating-linear-gradient(#777 0 1px, transparent 1px 2.5px);
}

.ws-canvas {
    flex: 1;
    min-height: 0;
    display: flex;
    background-color: #fff;
    background-image: linear-gradient(#f1f1f1 1px, transparent 1px), linear-gradient(90deg, #f1f1f1 1px, transparent 1px);
    background-size: 9.35px 9.35px;
}

.flow {
    flex: none;
    display: block;
}

.ws-foot {
    height: 12px;
    flex: none;
    background: #f3f3f3;
    display: flex;
    align-items: center;
    gap: 2px;
    justify-content: flex-end;
    padding-right: 6px;
}

.zoom-group {
    display: flex;
}

.foot-btn.minus {
    background: linear-gradient(#666, #666) center / 5px 1.3px no-repeat #fff;
}

.foot-btn.ring {
    background: radial-gradient(circle, #fff 0 1.8px, #777 2px 2.8px, #fff 3px);
}

.foot-btn.add {
    background: linear-gradient(#666, #666) center / 5px 1.3px no-repeat, linear-gradient(#666, #666) center / 1.3px 5px no-repeat, #fff;
}

/* flow diagram */
.wires path {
    fill: none;
    stroke: #999;
    stroke-width: 1.2;
}

.body {
    stroke: #999;
    stroke-width: .8;
}

.node text {
    font-size: 6.5px;
    fill: #333;
}

.node text.em {
    font-style: italic;
}

.node text.stat {
    font-size: 5.5px;
    fill: #888;
}

.btn {
    fill: #eee;
    stroke: #aaa;
    stroke-width: .8;
}

.btn-fill.blank {
    fill: #f4f4f4;
}

.band {
    fill: rgba(0, 0, 0, .07);
}

.band-line {
    fill: none;
    stroke: rgba(0, 0, 0, .1);
    stroke-width: .6;
}

.ic {
    fill: none;
    stroke: #fff;
    stroke-width: 1;
}

.ic.thick {
    stroke-width: 1.5;
}

.ic.grey {
    stroke: #bbb;
    fill: #fff;
}

.fl {
    fill: #fff;
}

.toggle-dot {
    fill: #a9dfe6;
}

.port {
    fill: #d9d9d9;
    stroke: #999;
    stroke-width: .8;
}

.dot.ok {
    fill: #3a8fe8;
}

.dot.off {
    fill: #fff;
    stroke: #c00;
    stroke-width: 1.5;
}

.inject { fill: #a6bbcf; background: #a6bbcf; }
.debug { fill: #87a980; background: #87a980; }
.complete { background: #c0edc0; }
.catch { background: #e49191; }
.status { background: #94c1d0; }
.link { background: #ddd; }
.comment { fill: #fff; background: #fff; }
.function { fill: #fdd0a2; background: #fdd0a2; }
.switch { fill: #e2d96e; background: #e2d96e; }
.template { fill: #f2b25f; background: #f2b25f; }
.delay { background: #e6e0f8; }
.string { background: #bbb; }
.mqtt { background: #d8bfd8; }
.http { fill: #e7e7ae; background: #e7e7ae; }
.uibtn { fill: #a9dfe6; }
.camera { fill: #7e9d26; }
.lime { fill: #a0c431; }
.html { fill: #3fadb5; }
.chart { fill: #6fc3cf; }

/* sidebar */
.separator {
    width: 4px;
    flex: none;
    background: #f3f3f3;
    border: solid #bbb;
    border-width: 0 1px;
}

.sidebar {
    flex: 1;
    min-width: 0;
    display: flex;
    flex-direction: column;
    background: #f3f3f3;
    font-size: 6.8px;
}

.side-tabs {
    height: 16px;
    flex: none;
    display: flex;
    align-items: flex-end;
    background: #fff;
    border-bottom: 1px solid #bbb;
    padding-left: 1px;
}

.side-tab {
    width: 61px;
    height: 16px;
    margin-bottom: -1px;
    background: #fff;
    border: 1px solid #ccc;
    border-bottom: 0;
    display: flex;
    align-items: center;
    font-weight: bold;
    color: #333;
    padding-left: 6px;
    gap: 6px;
}

.side-btn {
    width: 13px;
    height: 13px;
    margin: 0 0 1px 2.5px;
    border: 1px solid #ddd;
    display: flex;
    align-items: center;
    justify-content: center;
    font-family: "Liberation Serif", serif;
    font-size: 7px;
}

.side-tab + .side-btn {
    margin-left: 6px;
}

.side-btn.on {
    background: #e6e6e6;
}

.side-btn svg {
    width: 7px;
    height: 7px;
}

.caret {
    border: 2px solid transparent;
    border-top: 2.5px solid #888;
    border-bottom: 0;
}

.side-tabs > .caret {
    margin: 0 4px 6px auto;
}

.side-top {
    height: 231px;
    flex: none;
    display: flex;
    flex-direction: column;
    border-bottom: 1px solid #ddd;
}

.side-search-row {
    height: 19px;
    flex: none;
    display: flex;
    justify-content: flex-end;
    align-items: center;
    padding-right: 5px;
}

.side-search {
    width: 83px;
    height: 11px;
    background: #fff;
    border: 1px solid #ddd;
    display: flex;
    align-items: center;
    padding: 0 3px;
    font-size: 6px;
    color: #aaa;
}

.side-search .caret {
    margin-left: auto;
}

.side-tree-wrap {
    flex: 1;
    min-height: 0;
    display: flex;
}

.side-bar {
    width: 11px;
}

.tree {
    flex: 1;
    align-self: flex-start;
    background: #fff;
    color: #666;
    padding-bottom: 1px;
}

.row {
    height: 11.6px;
    display: flex;
    align-items: center;
    padding-left: 3px;
    position: relative;
}

.row i {
    width: 5px;
    margin-right: 3px;
    display: flex;
    justify-content: center;
}

.row i::before {
    content: "";
    width: 2.5px;
    height: 2.5px;
    border: solid #888;
    border-width: 0 .8px .8px 0;
    transform: rotate(-45deg);
}

.row i.open::before {
    transform: rotate(45deg);
}

.row.child {
    padding-left: 23px;
}

.row.off {
    color: #aaa;
}

.row.sel {
    background: #ffe7c4;
}

.flow-ic {
    width: 8px;
    height: 9px;
    margin-right: 3px;
    color: #777;
}

.state {
    position: absolute;
    right: 6px;
    width: 5px;
    height: 5px;
    border: 1px solid #aaa;
    border-radius: 50%;
}

.state.no {
    background: linear-gradient(135deg, transparent 40%, #888 40% 60%, transparent 60%);
    border-color: #888;
}

.info-head {
    height: 22px;
    flex: none;
    display: flex;
    align-items: center;
    padding-left: 8px;
    color: #444;
    border-bottom: 1px solid #ddd;
}

.info-head .big {
    width: 8px;
    height: 10px;
    margin-right: 5px;
}

.foot-btn.find {
    margin-left: auto;
    margin-right: 4px;
    background: #fff;
}

.find .search-ic {
    margin: 0;
    width: 5px;
    height: 5px;
}

.info-body {
    height: 134px;
    flex: none;
    display: flex;
    border-bottom: 1px solid #ddd;
}

.info-table {
    flex: 1;
    background: #fff;
}

.info-row {
    height: 14px;
    display: flex;
    border-bottom: 1px solid #eee;
}

.key {
    width: 46px;
    background: #f3f3f3;
    padding: 2px 0 0 3px;
    font-size: 7.5px;
    color: #555;
}

.val {
    padding: 3px 0 0 4px;
    font-size: 6.3px;
    color: #a33;
}

.tips {
    flex: 1;
    min-height: 0;
    background: #fff;
    position: relative;
    color: #aaa;
    font-size: 7.6px;
    line-height: 14px;
    text-align: center;
    padding-top: 21px;
}

.tips-btns {
    position: absolute;
    top: 3px;
    right: 3px;
    display: flex;
    gap: 2px;
}

code {
    font-family: "Liberation Mono", monospace;
    font-size: 6.8px;
    color: #999;
    background: #f6f6f6;
    border: 1px solid #ccc;
    border-radius: 2px;
    padding: 2px;
}

.side-foot {
    height: 12px;
    flex: none;
    border-top: 1px solid #ccc;
}
```
